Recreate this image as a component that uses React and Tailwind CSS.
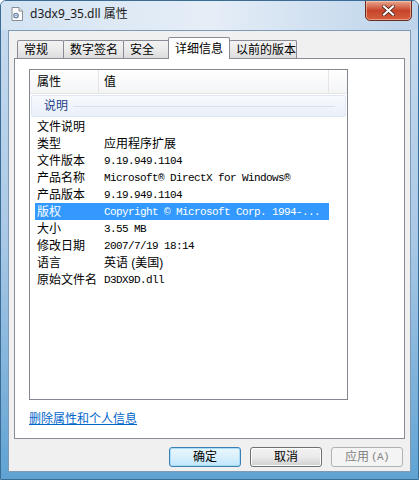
export default function App() {
  const rows = [
    ["文件说明", ""],
    ["类型", "应用程序扩展", "cjk"],
    ["文件版本", "9.19.949.1104"],
    ["产品名称", "Microsoft® DirectX for Windows®"],
    ["产品版本", "9.19.949.1104"],
    ["版权", "Copyright © Microsoft Corp. 1994-...", "sel"],
    ["大小", "3.55 MB"],
    ["修改日期", "2007/7/19 18:14"],
    ["语言", "英语 (美国)", "cjk"],
    ["原始文件名", "D3DX9D.dll"],
  ];
  const tabs = [
    ["常规", "w-[47px]"],
    ["数字签名", "w-[61px]"],
    ["安全", "w-[47px]"],
    ["详细信息", "w-[62px]", true],
    ["以前的版本", "w-[68px]"],
  ];
  return (
    <div className="w-[419px] h-[480px] flex flex-col bg-gradient-to-b from-[#c9dcef] via-[#a9c8e6] to-[#5fa3d3] font-['Liberation_Sans','Noto_Sans_CJK_SC',sans-serif] text-[12px] text-black overflow-hidden rounded-t-[6px] border border-[#3a6c96]">
      {/* title bar */}
      <div className="h-[29px] flex items-start shrink-0 relative bg-gradient-to-r from-[#d3e3f2] via-[#e6eef7] to-[#bcd3ea]">
        <div className="flex items-center h-[26px] pl-[10px] gap-[7px]">
          <svg width="12" height="14" viewBox="0 0 12 14">
            <path d="M1 0.5h7l3.5 3.5v9.5h-10.5z" fill="#fdfdfd" stroke="#8a8f96" />
            <path d="M8 0.5v3.5h3.5" fill="#e8e8e8" stroke="#8a8f96" />
            <circle cx="5" cy="8.5" r="2.2" fill="none" stroke="#6b87a8" strokeWidth="1.3" />
            <circle cx="5" cy="8.5" r="0.8" fill="#6b87a8" />
          </svg>
          <span className="text-[12px] font-['Noto_Sans','Noto_Sans_CJK_SC',sans-serif] text-[#1a1a1a]">d3dx9_35.dll 属性</span>
        </div>
        <div className="absolute right-[6px] top-[-1px] w-[47px] h-[21px] rounded-b-[5px] border border-[#6b2a20] bg-gradient-to-b from-[#e9a58f] via-[#c7442a] to-[#d65f3f] flex items-center justify-center shadow-[inset_0_0_0_1px_rgba(255,220,200,0.5)]">
          <svg width="13" height="11" viewBox="0 0 13 11">
            <path d="M2 1.5l9 8M11 1.5l-9 8" stroke="#3c1a14" strokeWidth="3.6" strokeLinecap="square" />
            <path d="M2 1.5l9 8M11 1.5l-9 8" stroke="#ffffff" strokeWidth="2.2" strokeLinecap="square" />
          </svg>
        </div>
      </div>
      {/* client area */}
      <div className="mx-[7px] mb-[7px] flex-1 bg-[#f0f0f0] border border-[#7e9ab5] flex flex-col">
        {/* tabs */}
        <div className="flex items-end pl-[8px] pt-[5px] h-[27px] shrink-0">
          {tabs.map(([t, w, sel]) => (
            <div
              key={t}
              className={
                sel
                  ? `${w} h-[22px] bg-white border border-[#898c95] border-b-0 rounded-t-[2px] -mb-px z-10 flex items-start pt-[3px] pl-[6px] mx-[-1px]`
                  : `${w} h-[18px] bg-gradient-to-b from-[#f2f2f2] via-[#ebebeb] to-[#dcdcdc] border border-[#898c95] border-b-0 rounded-t-[2px] flex items-start pt-[1px] pl-[6px] -mr-px`
              }
            >
              <span className="leading-[16px]">{t}</span>
            </div>
          ))}
        </div>
        {/* panel */}
        <div className="ml-[5px] w-[391px] h-[381px] bg-white border border-[#898c95] flex flex-col pl-[14px] pt-[10px]">
          <div className="w-[319px] h-[331px] border border-[#828790] flex flex-col">
            {/* header */}
            <div className="h-[24px] flex bg-gradient-to-b from-white to-[#f3f4f6] border-b border-[#e5e5e5] shrink-0">
              <div className="w-[69px] border-r border-[#e5e5e5] pl-[7px] flex items-center">属性</div>
              <div className="w-[230px] border-r border-[#e5e5e5] pl-[5px] flex items-center">值</div>
            </div>
            {/* group */}
            <div className="mx-[1px] mt-[1px] h-[22px] shrink-0 rounded-[2px] border border-[#dfe8f4] bg-gradient-to-b from-[#f7fafd] to-[#e9f0f9] flex items-center pl-[12px] pr-[10px] gap-[5px]">
              <span className="text-[#1e3f8a]">说明</span>
              <div className="flex-1 h-px bg-[#d7e1ef]" />
            </div>
            <div className="pt-[1px] flex flex-col">
              {rows.map(([k, v, kind]) => (
                <div
                  key={k}
                  className={`h-[17px] flex items-center ${kind === "sel" ? "bg-[#3399ff] text-white ml-[5px] w-[294px]" : "ml-[5px]"}`}
                >
                  <div className="w-[69px] pl-[2px] shrink-0 leading-[16px]">{k}</div>
                  <div
                    className={
                      kind === "cjk"
                        ? "leading-[16px] whitespace-nowrap"
                        : "font-['Liberation_Mono','Noto_Sans_CJK_SC',monospace] text-[11px] tracking-[-0.6px] leading-[16px] whitespace-nowrap"
                    }
                  >
                    {v}
                  </div>
                </div>
              ))}
            </div>
          </div>
          <div className="mt-[10px] ml-[0px]">
            <span className="text-[#0066cc] underline leading-[14px]">删除属性和个人信息</span>
          </div>
        </div>
        {/* buttons */}
        <div className="flex justify-end gap-[9px] pr-[7px] pt-[8px]">
          <div className="w-[72px] h-[20px] rounded-[3px] border border-[#3c7fb1] bg-gradient-to-b from-[#eaf6fd] via-[#d9f0fc] to-[#bee6fd] shadow-[inset_0_0_0_1px_#a8dcf8] flex items-center justify-center">确定</div>
          <div className="w-[72px] h-[20px] rounded-[3px] border border-[#707070] bg-gradient-to-b from-[#f2f2f2] via-[#ebebeb] to-[#cfcfcf] shadow-[inset_0_0_0_1px_#fcfcfc] flex items-center justify-center">取消</div>
          <div className="w-[72px] h-[20px] rounded-[3px] border border-[#adb2b5] bg-[#f4f4f4] text-[#838383] flex items-center justify-center">
            <span>应用</span>
            <span className="font-['Liberation_Mono',monospace] text-[11px] tracking-[-0.6px] ml-[2px]">(A)</span>
          </div>
        </div>
      </div>
    </div>
  );
}
